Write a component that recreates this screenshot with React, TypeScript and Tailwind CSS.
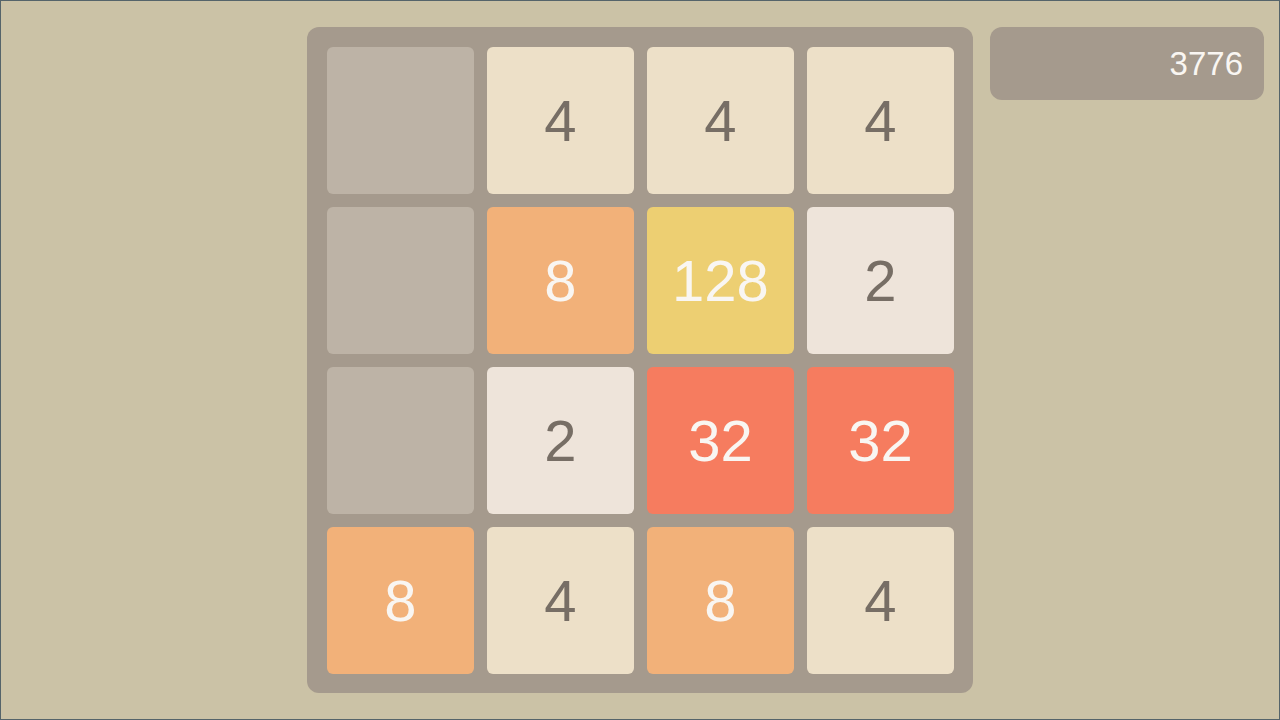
import React from 'react';

type Cell = number | null;

const board: Cell[][] = [
  [null, 4, 4, 4],
  [null, 8, 128, 2],
  [null, 2, 32, 32],
  [8, 4, 8, 4],
];

// background / text colours per tile value
const tileStyle: Record<number, string> = {
  2: 'bg-[#eee4da] text-[#776e65]',
  4: 'bg-[#ede0c8] text-[#776e65]',
  8: 'bg-[#f2b179] text-[#f9f6f2]',
  16: 'bg-[#f59563] text-[#f9f6f2]',
  32: 'bg-[#f67c5f] text-[#f9f6f2]',
  64: 'bg-[#f65e3b] text-[#f9f6f2]',
  128: 'bg-[#edcf72] text-[#f9f6f2]',
};

const Tile: React.FC<{ value: Cell }> = ({ value }) => {
  if (value === null) {
    return <div className="w-[147px] h-[147px] rounded-[6px] bg-[#bdb3a6]" />;
  }
  return (
    <div
      className={`w-[147px] h-[147px] rounded-[6px] flex items-center justify-center text-[58px] leading-none ${tileStyle[value]}`}
    >
      {value}
    </div>
  );
};

export default function App() {
  return (
    <div
      className="w-[1280px] h-[720px] bg-[#cbc2a6] border border-[#55646a] flex items-start pl-[306px] pt-[26px] gap-[17px]"
      style={{ fontFamily: '"Liberation Sans", Arial, sans-serif' }}
    >
      <div className="bg-[#a59a8d] rounded-[12px] pt-[20px] pl-[20px] pr-[19px] pb-[19px] grid grid-cols-4 gap-[13px]">
        {board.flat().map((v, i) => (
          <Tile key={i} value={v} />
        ))}
      </div>
      <div className="w-[274px] h-[73px] rounded-[12px] bg-[#a59a8d] flex items-center justify-end pr-[21px] text-[33px] text-[#f9f6f2]">
        3776
      </div>
    </div>
  );
}
